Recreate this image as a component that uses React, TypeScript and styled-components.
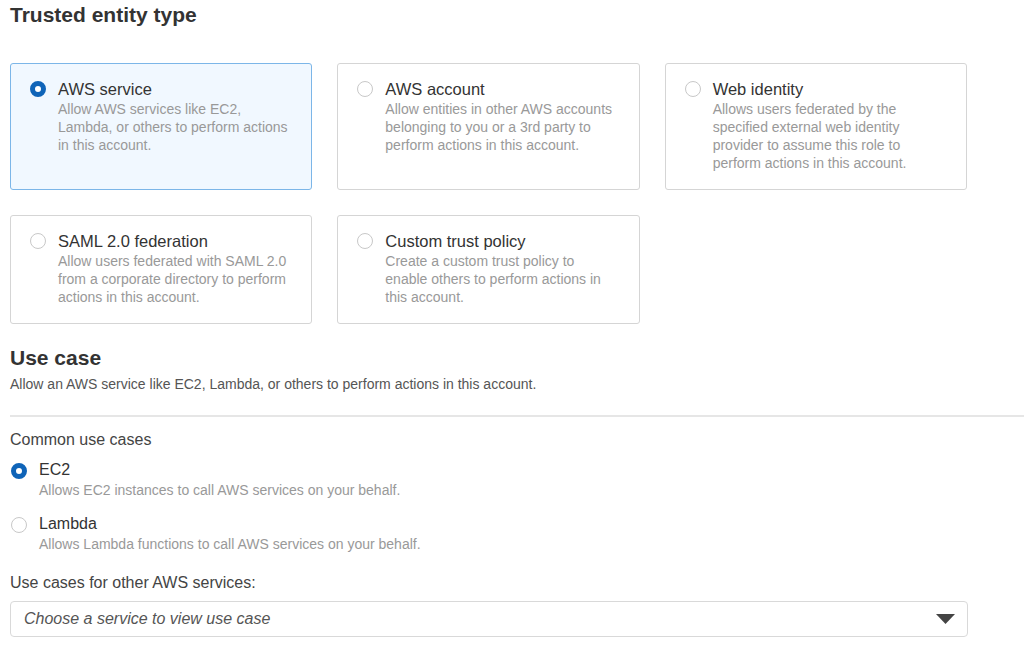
import styled, { createGlobalStyle } from "styled-components";

const GlobalStyle = createGlobalStyle`
  html, body {
    margin: 0;
    padding: 0;
    background: #ffffff;
  }
  body {
    font-family: "Liberation Sans", Arial, sans-serif;
    color: #16191f;
  }
`;

type EntityType = {
  title: string;
  description: string;
  selected?: boolean;
};

const entityTypes: EntityType[] = [
  {
    title: "AWS service",
    description:
      "Allow AWS services like EC2, Lambda, or others to perform actions in this account.",
    selected: true,
  },
  {
    title: "AWS account",
    description:
      "Allow entities in other AWS accounts belonging to you or a 3rd party to perform actions in this account.",
  },
  {
    title: "Web identity",
    description:
      "Allows users federated by the specified external web identity provider to assume this role to perform actions in this account.",
  },
  {
    title: "SAML 2.0 federation",
    description:
      "Allow users federated with SAML 2.0 from a corporate directory to perform actions in this account.",
  },
  {
    title: "Custom trust policy",
    description:
      "Create a custom trust policy to enable others to perform actions in this account.",
  },
];

const useCases = [
  {
    title: "EC2",
    description: "Allows EC2 instances to call AWS services on your behalf.",
    selected: true,
  },
  {
    title: "Lambda",
    description: "Allows Lambda functions to call AWS services on your behalf.",
  },
];

const Page = styled.div`
  padding: 3px 0 0 10px;
`;

const Heading = styled.h2`
  margin: 0;
  font-size: 21px;
  line-height: 24px;
  font-weight: 700;
  color: #333333;
`;

const CardGrid = styled.div`
  display: grid;
  grid-template-columns: repeat(3, 1fr);
  gap: 25px;
  width: 957px;
  margin-top: 36px;
`;

const Card = styled.label<{ $selected?: boolean }>`
  display: flex;
  align-items: flex-start;
  gap: 12px;
  padding: 14px 19px 17px 19px;
  border: 1px solid ${(p) => (p.$selected ? "#7cb6e8" : "#d5d5d5")};
  background: ${(p) => (p.$selected ? "#f1f8ff" : "#ffffff")};
  border-radius: 3px;
  cursor: pointer;
`;

const Radio = styled.span<{ $checked?: boolean }>`
  flex: none;
  box-sizing: border-box;
  width: 16px;
  height: 16px;
  margin-top: 3px;
  border-radius: 50%;
  background: #ffffff;
  border: ${(p) => (p.$checked ? "5px solid #0f64b8" : "1px solid #c8c8c8")};
`;

const CardBody = styled.div`
  display: flex;
  flex-direction: column;
`;

const CardTitle = styled.span`
  font-size: 16.5px;
  line-height: 22px;
  color: #333333;
`;

const CardText = styled.span`
  font-size: 14px;
  line-height: 18px;
  color: #999999;
`;

const UseCaseSection = styled.section`
  margin-top: 22px;
`;

const Lead = styled.p`
  margin: 6px 0 0;
  font-size: 14px;
  line-height: 16px;
  color: #555555;
`;

const Divider = styled.hr`
  margin: 23px 0 0;
  border: none;
  height: 2px;
  background: #e6e6e6;
`;

const Label = styled.div<{ $gap: number }>`
  margin-top: ${(p) => p.$gap}px;
  font-size: 16px;
  line-height: 20px;
  color: #444444;
`;

const OptionList = styled.div`
  display: flex;
  flex-direction: column;
  gap: 15px;
  margin-top: 10px;
`;

const Option = styled.label`
  display: flex;
  align-items: flex-start;
  gap: 12px;
  padding-left: 1px;
  cursor: pointer;
`;

const OptionTitle = styled.span`
  font-size: 16px;
  line-height: 20px;
  color: #333333;
`;

const OptionText = styled.span`
  margin-top: 1px;
  font-size: 14px;
  line-height: 18px;
  color: #999999;
`;

const Select = styled.div`
  display: flex;
  align-items: center;
  justify-content: space-between;
  box-sizing: border-box;
  width: 958px;
  height: 36px;
  margin-top: 8px;
  padding: 0 12px 0 13px;
  border: 1px solid #d9d9d9;
  border-radius: 4px;
  background: #ffffff;
`;

const Placeholder = styled.span`
  font-size: 16px;
  font-style: italic;
  color: #555555;
`;

const Caret = () => (
  <svg width="19" height="10" viewBox="0 0 19 10" aria-hidden="true">
    <path d="M0 0 H19 L9.5 10 Z" fill="#444444" />
  </svg>
);

export default function App() {
  return (
    <>
      <GlobalStyle />
      <Page>
        <Heading>Trusted entity type</Heading>
        <CardGrid>
          {entityTypes.map((t) => (
            <Card key={t.title} $selected={t.selected}>
              <Radio $checked={t.selected} />
              <CardBody>
                <CardTitle>{t.title}</CardTitle>
                <CardText>{t.description}</CardText>
              </CardBody>
            </Card>
          ))}
        </CardGrid>

        <UseCaseSection>
          <Heading>Use case</Heading>
          <Lead>
            Allow an AWS service like EC2, Lambda, or others to perform actions in this account.
          </Lead>
          <Divider />
          <Label $gap={13}>Common use cases</Label>
          <OptionList>
            {useCases.map((u) => (
              <Option key={u.title}>
                <Radio $checked={u.selected} />
                <CardBody>
                  <OptionTitle>{u.title}</OptionTitle>
                  <OptionText>{u.description}</OptionText>
                </CardBody>
              </Option>
            ))}
          </OptionList>
          <Label $gap={20}>Use cases for other AWS services:</Label>
          <Select>
            <Placeholder>Choose a service to view use case</Placeholder>
            <Caret />
          </Select>
        </UseCaseSection>
      </Page>
    </>
  );
}
